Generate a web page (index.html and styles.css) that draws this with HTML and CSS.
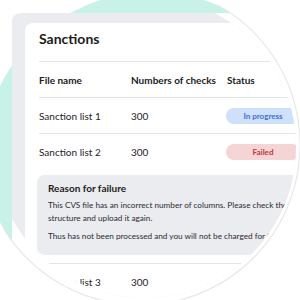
FILE: index.html
```html
<!DOCTYPE html>
<html>
<head>
<meta charset="utf-8">
<link rel="stylesheet" href="styles.css">
</head>
<body>
<div class="stage">
  <div class="backdrop"><div class="ring"><div class="mint"></div></div></div>
  <div class="frame">
    <div class="card">
      <h1 class="title">Sanctions</h1>
      <div class="row head">
        <span>File name</span><span>Numbers of checks</span><span>Status</span>
      </div>
      <div class="row">
        <span>Sanction list 1</span><span>300</span><span><span class="pill blue">In progress</span></span>
      </div>
      <div class="row open">
        <span>Sanction list 2</span><span>300</span><span><span class="pill red">Failed</span></span>
      </div>
      <div class="reason">
        <h2 class="reason-title">Reason for failure</h2>
        <p class="reason-text">This CVS file has an incorrect number of columns. Please check the<br>structure and upload it again.</p>
        <p class="reason-text gap">Thus has not been processed and you will not be charged for this file.</p>
      </div>
      <div class="row last">
        <span>Sanction list 3</span><span>300</span><span></span>
      </div>
    </div>
  </div>
  <svg class="rim" width="300" height="300" viewBox="0 0 300 300">
    <path d="M 217.5 5 A 160 160 0 1 1 3 227.6" fill="none" stroke="#e8e8eb" stroke-width="1.2"/>
  </svg>
</div>
</body>
</html>
```
FILE: styles.css
```css
html, body {
  margin: 0;
  padding: 0;
  background: #ffffff;
}

.stage {
  position: relative;
  width: 300px;
  height: 300px;
  overflow: hidden;
  background: #ffffff;
  padding: 13px 0 0 12px;
  box-sizing: border-box;
  font-family: Lato, "Liberation Sans", sans-serif;
  color: #23232a;
}

.backdrop {
  position: absolute;
  left: 0;
  top: 0;
  width: 300px;
  height: 300px;
  clip-path: polygon(0 0, 300px 0, 300px 13px, 12px 13px, 12px 300px, 0 300px);
}

.ring {
  width: 300px;
  height: 300px;
  position: relative;
  clip-path: circle(160px at 140px 145px);
}

.mint {
  position: absolute;
  left: -18px;
  top: -8px;
  width: 340px;
  height: 340px;
  border-radius: 50%;
  background: #c8f2e8;
}

.frame {
  position: relative;
  width: 288px;
  height: 287px;
  box-sizing: border-box;
  padding: 10px 0 0 13px;
  background: #ebecf0;
  border-top-left-radius: 8px;
  clip-path: path('M 0 8 Q 0 0 8 0 L 202.6 0 A 151 151 0 1 1 0 205.5 Z');
}

.card {
  height: 100%;
  box-sizing: border-box;
  padding-left: 14px;
  background: #ffffff;
  border-top-left-radius: 8px;
}

.title {
  margin: 0;
  padding: 6px 0 12px;
  font-size: 14px;
  line-height: 20px;
  font-weight: 700;
  color: #1c1c22;
  border-bottom: 1px solid #e3e4e8;
}

.row {
  display: grid;
  grid-template-columns: 92px 96px 1fr;
  align-items: center;
  height: 36px;
  box-sizing: border-box;
  border-bottom: 1px solid #e3e4e8;
  font-size: 10px;
  line-height: 14px;
  white-space: nowrap;
}

.head {
  font-weight: 700;
  color: #1c1c22;
}

.open {
  border-bottom: none;
}

.last {
  margin-top: 8px;
  border-bottom: none;
  border-top: 1px solid #e3e4e8;
}

.pill {
  display: block;
  width: 74px;
  height: 16px;
  margin-left: -1px;
  border-radius: 8px;
  font-size: 8px;
  line-height: 16px;
  font-weight: 700;
  text-align: center;
}

.blue {
  background: #cfe0fa;
  color: #3e6fd8;
}

.red {
  background: #f5d4d6;
  color: #c2343d;
}

.reason {
  margin: 5px 0 0 -2px;
  padding: 6px 11px 12px;
  background: #ebecf0;
  border-radius: 8px;
  white-space: nowrap;
}

.reason-title {
  margin: 0;
  font-size: 10px;
  line-height: 14px;
  font-weight: 700;
  color: #1c1c22;
}

.reason-text {
  margin: 4px 0 0;
  font-size: 8.2px;
  line-height: 13px;
  color: #2a2a30;
}

.reason-text.gap {
  margin-top: 5px;
}

.rim {
  position: absolute;
  left: 0;
  top: 0;
  pointer-events: none;
}
```
